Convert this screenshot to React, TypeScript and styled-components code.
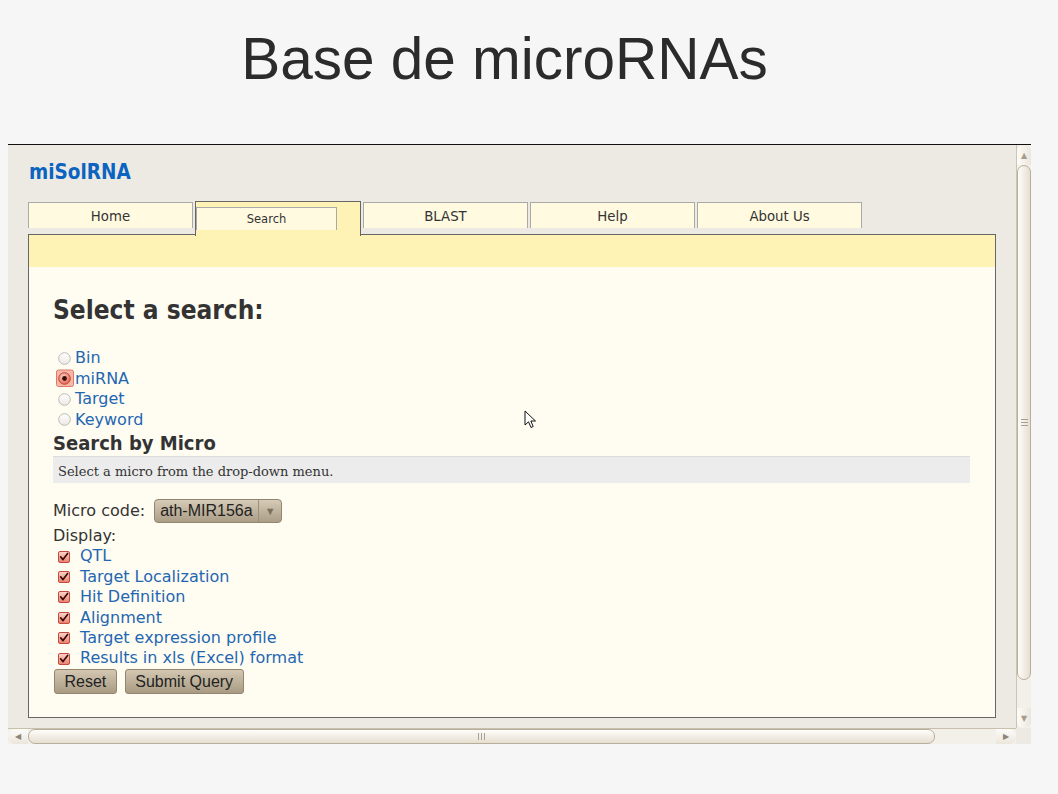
import React from "react";
import styled, { createGlobalStyle } from "styled-components";

const Global = createGlobalStyle`
  html, body { margin: 0; padding: 0; background: #f6f6f6; }
  body { font-family: "DejaVu Sans", sans-serif; }
`;

const Page = styled.div`
  position: relative;
  width: 1058px;
  height: 794px;
  background: #f6f6f6;
  overflow: hidden;
`;

const TitleBar = styled.header`
  height: 144px;
  box-sizing: border-box;
  padding-top: 30px;
  width: 1009px;
  text-align: center;
`;

const Title = styled.h1`
  margin: 0;
  font-family: "Liberation Sans", Arial, sans-serif;
  font-weight: normal;
  font-size: 58.5px;
  line-height: 58.5px;
  color: #2b2b2b;
`;

const Frame = styled.div`
  margin-left: 8px;
  width: 1023px;
  height: 600px;
  box-sizing: border-box;
  border-top: 1px solid #111;
  display: grid;
  grid-template-columns: 1008px 15px;
  grid-template-rows: 583px 16px;
`;

const Viewport = styled.div`
  background: #edeae4;
  box-sizing: border-box;
  padding: 12px 20px 10px;
  display: flex;
  flex-direction: column;
`;

const Logo = styled.div`
  font-family: "DejaVu Sans", sans-serif;
  font-stretch: condensed;
  font-weight: bold;
  font-size: 20.5px;
  line-height: 30px;
  color: #0b64c0;
  padding-left: 1px;
`;

const TabRow = styled.nav`
  display: flex;
  gap: 2px;
  align-items: flex-start;
  height: 34px;
  margin-top: 14px;
  margin-bottom: -1px;
  position: relative;
  z-index: 1;
`;

const Tab = styled.div`
  width: 165px;
  height: 26px;
  margin-top: 1px;
  box-sizing: border-box;
  border: 1px solid #a9a9a9;
  border-bottom: none;
  background: #fffae0;
  font-size: 13.3px;
  line-height: 24px;
  padding-top: 2px;
  color: #333;
  text-align: center;
`;

const ActiveTab = styled.div`
  width: 166px;
  height: 35px;
  box-sizing: border-box;
  border: 1px solid #666;
  border-bottom: none;
  background: #fff2b5;
  padding-top: 5px;
`;

const ActiveInner = styled.div`
  width: 141px;
  height: 23px;
  box-sizing: border-box;
  border: 1px solid #a9a9a9;
  border-bottom: none;
  background: #fffae0;
  font-size: 11.5px;
  line-height: 20px;
  padding-top: 1px;
  color: #333;
  text-align: center;
`;

const Panel = styled.section`
  flex: 1;
  border: 1px solid #666;
  background: #fffcf2;
  display: flex;
  flex-direction: column;
`;

const Band = styled.div`
  height: 32px;
  background: #fff2b5;
`;

const PanelBody = styled.div`
  padding: 30px 25px 0 24px;
  color: #333;
`;

const H2 = styled.h2`
  margin: 0;
  font-family: "DejaVu Sans", sans-serif;
  font-stretch: condensed;
  font-weight: bold;
  font-size: 26px;
  line-height: 26px;
  color: #333;
`;

const H3 = styled.h3`
  margin: 1px 0 0;
  font-family: "DejaVu Sans", sans-serif;
  font-stretch: condensed;
  font-weight: bold;
  font-size: 20px;
  line-height: 24px;
  color: #333;
`;

const RadioList = styled.div`
  margin-top: 25px;
  display: flex;
  flex-direction: column;
`;

const Row = styled.label<{ $h: number }>`
  display: flex;
  align-items: center;
  height: ${(p) => p.$h}px;
  font-size: 16px;
  line-height: ${(p) => p.$h}px;
`;

const LinkText = styled.span<{ $gap: number }>`
  color: #1f67b1;
  margin-left: ${(p) => p.$gap}px;
`;

const IconBox = styled.span`
  display: inline-flex;
  margin-left: 5px;
`;

const InfoBar = styled.div`
  margin-top: 1px;
  height: 27px;
  box-sizing: border-box;
  border-top: 1px solid #dcdcdc;
  background: #ececec;
  font-family: "DejaVu Serif", serif;
  font-size: 13px;
  line-height: 26px;
  padding: 2px 0 0 5px;
  color: #333;
`;

const CodeRow = styled.div`
  margin-top: 16px;
  display: flex;
  align-items: center;
  height: 24px;
  font-size: 16px;
  line-height: 24px;
`;

const Select = styled.div`
  margin-left: 9px;
  width: 128px;
  height: 24px;
  box-sizing: border-box;
  border: 1px solid #93856e;
  border-radius: 4px;
  background: linear-gradient(#d6cbb7, #ab9d86);
  display: flex;
  font-family: "Liberation Sans", Arial, sans-serif;
  font-size: 16px;
  line-height: 22px;
  color: #222;
`;

const SelectValue = styled.span`
  width: 104px;
  padding-left: 5px;
  box-sizing: border-box;
  border-right: 1px solid #9c8f79;
`;

const SelectArrow = styled.span`
  flex: 1;
  display: flex;
  align-items: center;
  justify-content: center;
  color: #7b6f5d;
  font-size: 11px;
`;

const Plain = styled.div`
  margin-top: 3px;
  font-size: 16px;
  line-height: 20.4px;
  height: 20.4px;
`;

const Buttons = styled.div`
  margin-top: 0.5px;
  display: flex;
  gap: 8px;
  padding-left: 1px;
`;

const Button = styled.button`
  height: 25px;
  box-sizing: border-box;
  border: 1px solid #93856e;
  border-radius: 3px;
  background: linear-gradient(#d3c7b2, #a99b83);
  padding: 0 9.5px;
  font-family: "Liberation Sans", Arial, sans-serif;
  font-size: 16px;
  line-height: 22px;
  color: #222;
`;

const VScroll = styled.div`
  display: flex;
  flex-direction: column;
  background: #f3f0ea;
  border-left: 1px solid #cdc4b4;
  box-sizing: border-box;
`;

const HScroll = styled.div`
  display: flex;
  background: #f3f0ea;
  border-top: 1px solid #c9bfad;
  box-sizing: border-box;
`;

const VBtn = styled.div<{ $dir: "up" | "down" }>`
  height: 20px;
  display: flex;
  align-items: center;
  justify-content: center;
  color: #a59c8c;
  font-size: 8px;
  background: linear-gradient(90deg, #fdfcf9, #ebe6dc);
  border-radius: ${(p) => (p.$dir === "up" ? "7px 7px 0 0" : "0 0 7px 7px")};
`;

const HBtn = styled.div<{ $dir: "left" | "right" }>`
  width: 20px;
  display: flex;
  align-items: center;
  justify-content: center;
  color: #8e8576;
  font-size: 8px;
  background: linear-gradient(#fdfcf9, #ebe6dc);
  border-radius: ${(p) => (p.$dir === "left" ? "7px 0 0 7px" : "0 7px 7px 0")};
`;

const VTrack = styled.div`
  flex: 1;
  display: flex;
  flex-direction: column;
`;

const HTrack = styled.div`
  flex: 1;
  display: flex;
`;

const VThumb = styled.div`
  height: 515px;
  box-sizing: border-box;
  border: 1px solid #b9ae9b;
  border-radius: 7px;
  background: linear-gradient(90deg, #fefdfa, #e6dfd1);
  display: flex;
  flex-direction: column;
  align-items: center;
  justify-content: center;
  gap: 2px;
`;

const HThumb = styled.div`
  width: 907px;
  box-sizing: border-box;
  border: 1px solid #b9ae9b;
  border-radius: 7px;
  background: linear-gradient(#fefdfa, #e6dfd1);
  display: flex;
  align-items: center;
  justify-content: center;
  gap: 2px;
`;

const GripH = styled.span`
  width: 7px;
  height: 1px;
  background: #aaa092;
`;

const GripV = styled.span`
  width: 1px;
  height: 7px;
  background: #aaa092;
`;

const Corner = styled.div`
  background: #edeae4;
`;

const Cursor = styled.svg`
  position: absolute;
  left: 524px;
  top: 410px;
`;

const RadioIcon = ({ checked }: { checked?: boolean }) => (
  <svg width="13" height="13" viewBox="0 0 13 13" style={{ overflow: "visible" }}>
    <defs>
      <radialGradient id="rg" cx="40%" cy="35%" r="70%">
        <stop offset="0" stopColor="#fbd2c8" />
        <stop offset="1" stopColor="#e0604c" />
      </radialGradient>
      <linearGradient id="wg" x1="0" y1="0" x2="0" y2="1">
        <stop offset="0" stopColor="#ffffff" />
        <stop offset="1" stopColor="#ebe9e4" />
      </linearGradient>
    </defs>
    {checked && (
      <rect x="-1.5" y="-2" width="17" height="16.5" rx="2" fill="#f7b8aa" stroke="#e07a68" />
    )}
    <circle cx="6.5" cy="6.5" r="5.8" fill={checked ? "url(#rg)" : "url(#wg)"} stroke={checked ? "#c8432f" : "#bdbab4"} />
    {checked && <circle cx="6.5" cy="6.5" r="2.4" fill="#3a0d07" />}
  </svg>
);

const CheckIcon = () => (
  <svg width="12" height="12" viewBox="0 0 12 12">
    <defs>
      <linearGradient id="cg" x1="0" y1="0" x2="0" y2="1">
        <stop offset="0" stopColor="#fbd7cf" />
        <stop offset="1" stopColor="#e9806f" />
      </linearGradient>
    </defs>
    <rect x="0.5" y="0.5" width="11" height="11" rx="1.5" fill="url(#cg)" stroke="#c9483a" />
    <path d="M2.6 5.8 L5 8.6 L9.6 2.4" stroke="#3b0b05" strokeWidth="1.7" fill="none" strokeLinecap="round" strokeLinejoin="round" />
  </svg>
);

const radios = [
  { label: "Bin" },
  { label: "miRNA", checked: true },
  { label: "Target" },
  { label: "Keyword" },
];

const checks = [
  "QTL",
  "Target Localization",
  "Hit Definition",
  "Alignment",
  "Target expression profile",
  "Results in xls (Excel) format",
];

export default function App() {
  return (
    <Page>
      <Global />
      <TitleBar>
        <Title>Base de microRNAs</Title>
      </TitleBar>
      <Frame>
        <Viewport>
          <Logo>miSolRNA</Logo>
          <TabRow>
            <Tab>Home</Tab>
            <ActiveTab>
              <ActiveInner>Search</ActiveInner>
            </ActiveTab>
            <Tab>BLAST</Tab>
            <Tab>Help</Tab>
            <Tab>About Us</Tab>
          </TabRow>
          <Panel>
            <Band />
            <PanelBody>
              <H2>Select a search:</H2>
              <RadioList>
                {radios.map((r) => (
                  <Row key={r.label} $h={20.5}>
                    <IconBox>
                      <RadioIcon checked={r.checked} />
                    </IconBox>
                    <LinkText $gap={4}>{r.label}</LinkText>
                  </Row>
                ))}
              </RadioList>
              <H3>Search by Micro</H3>
              <InfoBar>Select a micro from the drop-down menu.</InfoBar>
              <CodeRow>
                Micro code:
                <Select>
                  <SelectValue>ath-MIR156a</SelectValue>
                  <SelectArrow>▼</SelectArrow>
                </Select>
              </CodeRow>
              <Plain>Display:</Plain>
              {checks.map((c) => (
                <Row key={c} $h={20.4}>
                  <IconBox>
                    <CheckIcon />
                  </IconBox>
                  <LinkText $gap={10}>{c}</LinkText>
                </Row>
              ))}
              <Buttons>
                <Button>Reset</Button>
                <Button>Submit Query</Button>
              </Buttons>
            </PanelBody>
          </Panel>
        </Viewport>
        <VScroll>
          <VBtn $dir="up">▲</VBtn>
          <VTrack>
            <VThumb>
              <GripH />
              <GripH />
              <GripH />
            </VThumb>
          </VTrack>
          <VBtn $dir="down">▼</VBtn>
        </VScroll>
        <HScroll>
          <HBtn $dir="left">◀</HBtn>
          <HTrack>
            <HThumb>
              <GripV />
              <GripV />
              <GripV />
            </HThumb>
          </HTrack>
          <HBtn $dir="right">▶</HBtn>
        </HScroll>
        <Corner />
      </Frame>
      <Cursor width="13" height="20" viewBox="0 0 13 20">
        <path d="M1 1 L1 15 L4.5 11.8 L7 17.5 L9.2 16.5 L6.8 11 L11.5 11 Z" fill="#fff" stroke="#111" strokeWidth="1" strokeLinejoin="round" />
      </Cursor>
    </Page>
  );
}
